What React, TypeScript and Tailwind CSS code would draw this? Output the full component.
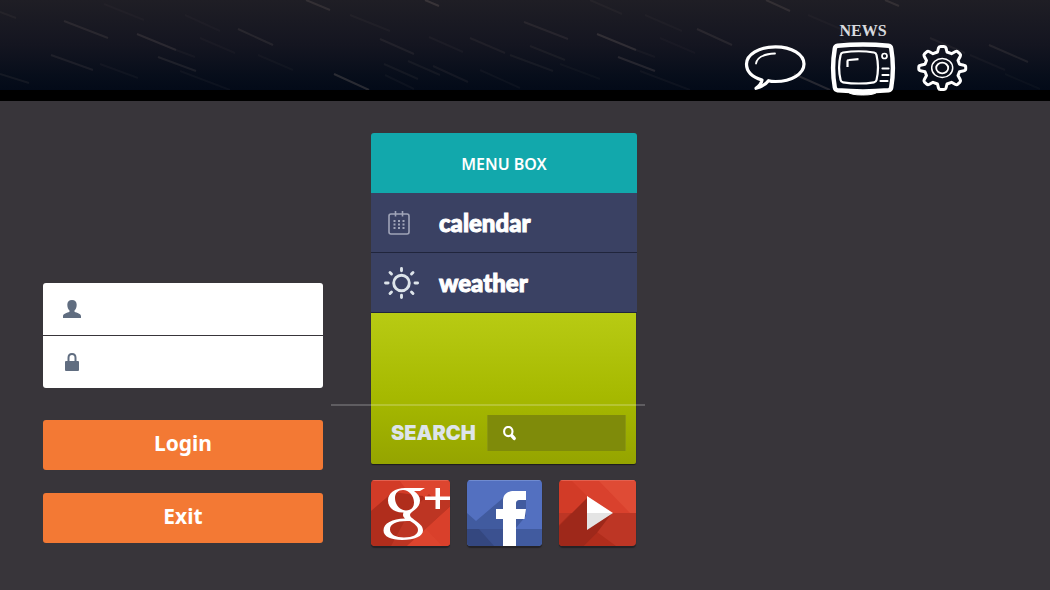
import type { ReactNode } from 'react';

type Streak = [number, number, number, number, number];

// x1, y1, x2, y2, opacity
const streaks: Streak[] = [
  [64, 21, 108, 38, 0.17],
  [51, 55, 93, 70, 0.15],
  [0, 74, 29, 83, 0.12],
  [137, 34, 176, 50, 0.2],
  [158, 57, 196, 71, 0.16],
  [176, 50, 195, 57, 0.07],
  [100, 64, 138, 78, 0.07],
  [180, 71, 230, 90, 0.07],
  [306, 0, 330, 10, 0.2],
  [238, 29, 273, 45, 0.16],
  [185, 15, 220, 31, 0.05],
  [200, 38, 235, 53, 0.06],
  [258, 55, 293, 70, 0.06],
  [334, 74, 369, 90, 0.3],
  [0, 12, 16, 18, 0.09],
  [104, 4, 144, 20, 0.05],
  [350, 15, 390, 31, 0.07],
  [380, 39, 414, 54, 0.13],
  [408, 61, 440, 75, 0.1],
  [384, 64, 418, 79, 0.1],
  [429, 37, 463, 52, 0.08],
  [433, 66, 468, 82, 0.11],
  [470, 38, 505, 53, 0.11],
  [524, 22, 568, 39, 0.15],
  [510, 55, 553, 71, 0.1],
  [530, 46, 565, 60, 0.1],
  [385, 75, 414, 89, 0.07],
  [425, 0, 439, 6, 0.25],
  [480, 70, 520, 88, 0.07],
  [560, 64, 600, 79, 0.06],
  [597, 34, 636, 50, 0.25],
  [618, 57, 655, 71, 0.22],
  [636, 50, 655, 57, 0.07],
  [590, 0, 622, 14, 0.07],
  [645, 15, 682, 31, 0.06],
  [640, 71, 690, 90, 0.08],
  [697, 29, 732, 45, 0.17],
  [660, 38, 695, 53, 0.05],
  [766, 0, 790, 11, 0.2],
  [794, 74, 830, 90, 0.28],
  [885, 0, 899, 6, 0.2],
  [808, 15, 850, 33, 0.06],
  [840, 39, 874, 54, 0.08],
  [930, 38, 965, 53, 0.12],
  [989, 45, 1028, 62, 0.17],
  [970, 55, 1005, 70, 0.08],
  [1005, 74, 1040, 89, 0.06],
];

function NightSky() {
  return (
    <svg
      aria-hidden="true"
      className="absolute inset-0 h-full w-full opacity-60"
      viewBox="0 0 1050 90"
      preserveAspectRatio="none"
    >
      {streaks.map(([x1, y1, x2, y2, o], i) => (
        <line key={i} x1={x1} y1={y1} x2={x2} y2={y2} stroke="#d0b8a8" strokeOpacity={o} strokeWidth="2" />
      ))}
    </svg>
  );
}

function ChatIcon() {
  return (
    <svg width="62" height="46" viewBox="0 0 62 46" fill="none" stroke="#fff" strokeLinecap="round" strokeLinejoin="round" aria-hidden="true">
      <path strokeWidth="3.200" d="M18 35C8 32 2.500 26 2.500 19 2.500 9.500 15 1.800 31.500 1.800S60 9.500 60 19s-12 17.500-28.500 17.500c-3 0-4.500 0-7-.8-3 4-7.500 6.200-12.500 7.600 3.500-2.600 5.500-5 6-8.300Z" />
      <path strokeWidth="1.800" d="M12 18.500c1-6 8-9.500 19-10" />
    </svg>
  );
}

function TvIcon() {
  return (
    <svg width="66" height="54" viewBox="0 0 66 54" fill="none" stroke="#fff" strokeLinecap="round" strokeLinejoin="round" aria-hidden="true">
      <path strokeWidth="4.400" d="M7.500 3.800Q33 1.200 58.500 3.800q2.300.3 2.700 2.700 3.400 19.500 0 39-.4 2.400-2.700 2.700Q33 50.500 7.500 48.200q-2.300-.3-2.700-2.700-3.400-19.500 0-39Q5.200 4.100 7.500 3.800Z" />
      <path fill="#fff" strokeWidth="1" d="M18 50h29q-2 3-14.500 3T18 50Z" />
      <path strokeWidth="2.200" d="M13 10.500q16-2.500 31 0 2 .4 2.500 2.500 3 12.500 0 25-.5 2-2.500 2.300-15 2.400-31 0-2-.3-2.400-2.300-3-12.500 0-25 .4-2.100 2.400-2.500Z" />
      <path strokeWidth="2.200" strokeLinecap="butt" d="M17.500 25v-6q0-1 1.500-1l9.500-.8" />
      <circle cx="54.500" cy="14" r="2.500" strokeWidth="1.700" />
      <path strokeWidth="2.200" d="M52.500 26.500h6M52.500 33h6M50.500 39h7" />
    </svg>
  );
}

function GearIcon() {
  return (
    <svg width="52" height="46" viewBox="0 0 52 46" fill="none" stroke="#fff" strokeLinejoin="round" aria-hidden="true">
      <path
        strokeWidth="3"
        d="M22.500 3q.4-1.500 2-1.500h3.500q1.600 0 2 1.500l1 4 4.500 1.700 4-2.200q1.300-.6 2.300.4l2.200 2q1 1 .3 2.300L42 15.500l1.500 3.800 4.500.9q1.700.3 1.700 1.700v2.200q0 1.400-1.700 1.700l-4.500.9L42 30.500l2.300 4.300q.7 1.300-.3 2.300l-2.200 2q-1 1-2.300.4l-4-2.200L31 39l-1 4q-.4 1.500-2 1.500h-3.500q-1.600 0-2-1.500l-1-4-4.500-1.700-4 2.200q-1.300.6-2.300-.4l-2.200-2q-1-1-.3-2.300l2.300-4.300L9 26.700l-4.500-.9q-1.700-.3-1.700-1.700v-2.200q0-1.400 1.700-1.700l4.500-.9 1.500-3.800-2.300-4.300q-.7-1.300.3-2.300l2.200-2q1-1 2.300-.4l4 2.200L21.500 7Z"
      />
      <ellipse cx="26.200" cy="23" rx="10.500" ry="9.500" strokeWidth="1.500" />
      <ellipse cx="26.200" cy="23" rx="6" ry="5.300" strokeWidth="1.800" />
    </svg>
  );
}

function CalendarIcon() {
  return (
    <svg width="22" height="24" viewBox="0 0 22 24" fill="none" stroke="#a0a4b8" aria-hidden="true">
      <rect x="1" y="3" width="20" height="20" rx="2" strokeWidth="1.600" />
      <path strokeWidth="1.600" d="M7.500 0v5.500M14.500 0v5.500" />
      <path strokeWidth="2" strokeDasharray="2 2.500" d="M5.500 10h11M5.500 13.500h11M5.500 17h11" />
    </svg>
  );
}

function SunIcon() {
  return (
    <svg width="36" height="34" viewBox="0 0 36 34" fill="none" stroke="#dde4ea" strokeWidth="2.900" strokeLinecap="round" aria-hidden="true">
      <circle cx="17.500" cy="17" r="7.800" />
      <path d="M17.500 2.500v2.300M17.500 29.200v2.300M1.500 17h2.600M31 17h2.600M6 6.500l1.500 1.500M29 6.500l-1.500 1.500M6 27.500l1.500-1.500M29 27.500l-1.500-1.500" />
    </svg>
  );
}

function UserIcon() {
  return (
    <svg width="18" height="18" viewBox="0 0 18 18" fill="#606d80" aria-hidden="true">
      <path d="M9 0c3 0 4.700 2 4.700 4.800 0 2.500-.9 4.600-2.200 5.700v1.300c2.500 1.200 6.500 1.800 6.500 4.400V18H0v-1.800c0-2.600 4-3.200 6.500-4.400v-1.300C5.200 9.400 4.300 7.300 4.300 4.800 4.300 2 6 0 9 0Z" />
    </svg>
  );
}

function LockIcon() {
  return (
    <svg width="18" height="18" viewBox="0 0 18 18" aria-hidden="true">
      <path d="M5.500 9V4.800C5.500 2.300 7 1 9 1s3.500 1.300 3.500 3.800V9" fill="none" stroke="#606d80" strokeWidth="2" />
      <rect x="2" y="8" width="14" height="10" rx="1" fill="#606d80" />
    </svg>
  );
}

function SearchIcon() {
  return (
    <svg width="14" height="15" viewBox="0 0 14 15" fill="none" stroke="#fff" aria-hidden="true">
      <ellipse cx="5.300" cy="5.500" rx="4.200" ry="4.600" strokeWidth="2.100" />
      <path strokeWidth="3.400" strokeLinecap="round" d="m9 9.800 2.200 2.600" />
    </svg>
  );
}

function GooglePlusTile() {
  return (
    <svg className="h-full w-full" viewBox="0 0 79 66" preserveAspectRatio="none" aria-hidden="true">
      <path fill="#d23b27" d="M0 0h79v66H0z" />
      <path fill="#dd452f" d="M28 0h51v66z" />
      <path fill="#d9402b" d="M79 30v36H36z" />
      <path fill="#b02d1c" d="M0 31 22 12l30 4 10 18-26 32H0Z" />
      <path fill="#bd3523" d="m38 33 20-19 4 4h17v9L36 66H20Z" />
      <path fill="#d9402b" d="M79 27v39H36Z" />
      <path fill="#e04a35" d="m55 49 16 17H36Z" opacity=".4" />
      <path
        fill="#fff"
        fillRule="evenodd"
        d="M34 8h20l-5 3h-6c4 3 6 5.500 6 9.500 0 4-2 7-5.500 9.500-3 2.300-4.500 3.300-4.500 5s2 3 4.500 5c5 3.500 8.500 6 8.500 10.500C52 56 44 60 31 60c-11 0-18.500-3.500-18.500-9.500C12.500 43 21 39 34 38.500c-2-2-2.500-3.500-1.500-6C24 33 17 28 17 20.500 17 13 24 8 34 8ZM32 10c-5 0-8 3-8 8 0 6.500 5 12.500 11 12.500 5 0 8-3 8-8C43 16 38 10 32 10Zm4 31c-11 0-17 3-17 8.500 0 5 6 8 14 8 9 0 14-3 14-7.500 0-4-3.500-6-8-9Z"
      />
      <path fill="#fff" d="M54 16.500h10.500V8H69v8.500h10V20H69v9h-4.500v-9H54Z" />
      <path fill="#e3604f" d="M0 0h79v1H0z" />
    </svg>
  );
}

function FacebookTile() {
  return (
    <svg className="h-full w-full" viewBox="0 0 75 66" preserveAspectRatio="none" aria-hidden="true">
      <path fill="#5370c0" d="M0 0h75v66H0z" />
      <path fill="#415b9f" d="M0 33 9 41 42 13l17 5v18L48 49h27v17H0Z" />
      <path fill="#34477f" d="M0 49h36v17H0z" />
      <path fill="#3b5190" d="M12 49h24v17h-9Z" />
      <path fill="#fff" d="M36 66V39h-7V29h7v-8c0-6.500 4-10 11-10h12v9h-6c-3 0-4 1-4 4v5h10l-1.500 10H49v27Z" />
      <path fill="#708bd0" d="M0 0h75v1H0z" />
    </svg>
  );
}

function YoutubeTile() {
  return (
    <svg className="h-full w-full" viewBox="0 0 77 66" preserveAspectRatio="none" aria-hidden="true">
      <path fill="#d23b27" d="M0 0h77v33H0z" />
      <path fill="#d9412d" d="M12 0h65v33H45Z" />
      <path fill="#df4b35" d="M39 0h38v33h-6Z" />
      <path fill="#bd3625" d="M0 33h77v33H0z" />
      <path fill="#b02d1c" d="M0 45 12 33l45 33H0Z" />
      <path fill="#9e281a" d="M0 46 28 18l25 15-16 21-12 12H0Z" />
      <path fill="#b02d1c" d="m25 66 12-12 12 12Z" />
      <path fill="#fff" d="M28 16v17h26Z" />
      <path fill="#e4e4e4" d="M28 50V33h26Z" />
      <path fill="#e3604f" d="M0 0h77v1H0z" />
    </svg>
  );
}

function MenuItem({ icon, label }: { icon: ReactNode; label: string }) {
  return (
    <li>
      <a href="#" className="flex h-[59px] items-center bg-[#3a4163] pl-3 font-['Lato',sans-serif] text-2xl font-black leading-6 text-white">
        <span className="flex w-14 pl-px">{icon}</span>
        <span className="[-webkit-text-stroke:1px_white]">{label}</span>
      </a>
    </li>
  );
}

export default function App() {
  return (
    <div className="min-h-screen bg-[#38353a]">
      <header className="relative flex h-[101px] justify-end border-b-[11px] border-black bg-linear-to-b from-[#1f1e25] via-[#141520] to-[#030a18] pr-[82px]">
        <NightSky />
        <nav aria-label="Main" className="relative flex h-24 items-end">
          <a href="#" aria-label="Messages" className="mb-[5px] mr-6">
            <ChatIcon />
          </a>
          <a href="#" className="mr-5 flex flex-col items-center">
            <span className="font-['Liberation_Serif',serif] text-base font-bold leading-[22px] text-[#d8dade]">NEWS</span>
            <TvIcon />
          </a>
          <a href="#" aria-label="Settings" className="mb-[5px]">
            <GearIcon />
          </a>
        </nav>
      </header>

      <main className="flex items-start gap-12 pl-[43px] pt-8">
        <form className="mt-[150px] w-[280px]" onSubmit={(e) => e.preventDefault()}>
          <div className="grid gap-px overflow-hidden rounded-[3px]">
            <label className="flex h-[52px] items-center bg-white pl-5">
              <UserIcon />
              <input type="text" aria-label="User name" className="ml-4 h-full min-w-0 flex-1 outline-none" />
            </label>
            <label className="flex h-[52px] items-center bg-white pl-5">
              <LockIcon />
              <input type="password" aria-label="Password" className="ml-4 h-full min-w-0 flex-1 outline-none" />
            </label>
          </div>
          <div className="mt-8 grid gap-[23px] font-['Noto_Sans',sans-serif] text-[21px] font-bold text-white">
            <button type="submit" className="h-[50px] rounded-[3px] bg-[#f37934] pb-0.5">Login</button>
            <button type="button" className="h-[50px] rounded-[3px] bg-[#f37934] pb-0.5">Exit</button>
          </div>
        </form>

        <section className="w-[266px]">
          <h1 className="flex h-[60px] items-center justify-center rounded-t-[3px] bg-[#12a8ac] pt-0.5 font-['Noto_Sans',sans-serif] text-base font-semibold text-white">
            MENU BOX
          </h1>
          <ul className="grid gap-px bg-[#20253c] pb-px">
            <MenuItem icon={<span className="pl-1"><CalendarIcon /></span>} label="calendar" />
            <MenuItem icon={<SunIcon />} label="weather" />
          </ul>
          <div className="mr-px flex h-[151px] flex-col justify-end rounded-b-[2px] bg-linear-to-b from-[#b8cb13] via-[#a6b900] via-55% to-[#95a400] shadow-[0_1px_1px_#1c1c1c]">
            <div className="-ml-10 mr-[-9px] border-t-2 border-white/20" />
            <label className="flex h-[58px] items-center pb-1 pl-5 pr-[10px]">
              <span className="w-24 font-['Inter',sans-serif] text-xl font-black text-[#dde4ea]">SEARCH</span>
              <span className="flex h-9 min-w-0 flex-1 items-center border-x border-[#8a9710] bg-[#7f8b0a] pl-[15px]">
                <SearchIcon />
                <input type="search" className="ml-2 h-full min-w-0 flex-1 bg-transparent text-white outline-none" />
              </span>
            </label>
          </div>
          <div className="mr-px mt-4 flex justify-between">
            <a href="#" aria-label="Google Plus" className="h-[66px] w-[79px] overflow-hidden rounded shadow-[0_2px_1px_#242226]">
              <GooglePlusTile />
            </a>
            <a href="#" aria-label="Facebook" className="h-[66px] w-[75px] overflow-hidden rounded shadow-[0_2px_1px_#242226]">
              <FacebookTile />
            </a>
            <a href="#" aria-label="YouTube" className="h-[66px] w-[77px] overflow-hidden rounded shadow-[0_2px_1px_#242226]">
              <YoutubeTile />
            </a>
          </div>
        </section>
      </main>
    </div>
  );
}
